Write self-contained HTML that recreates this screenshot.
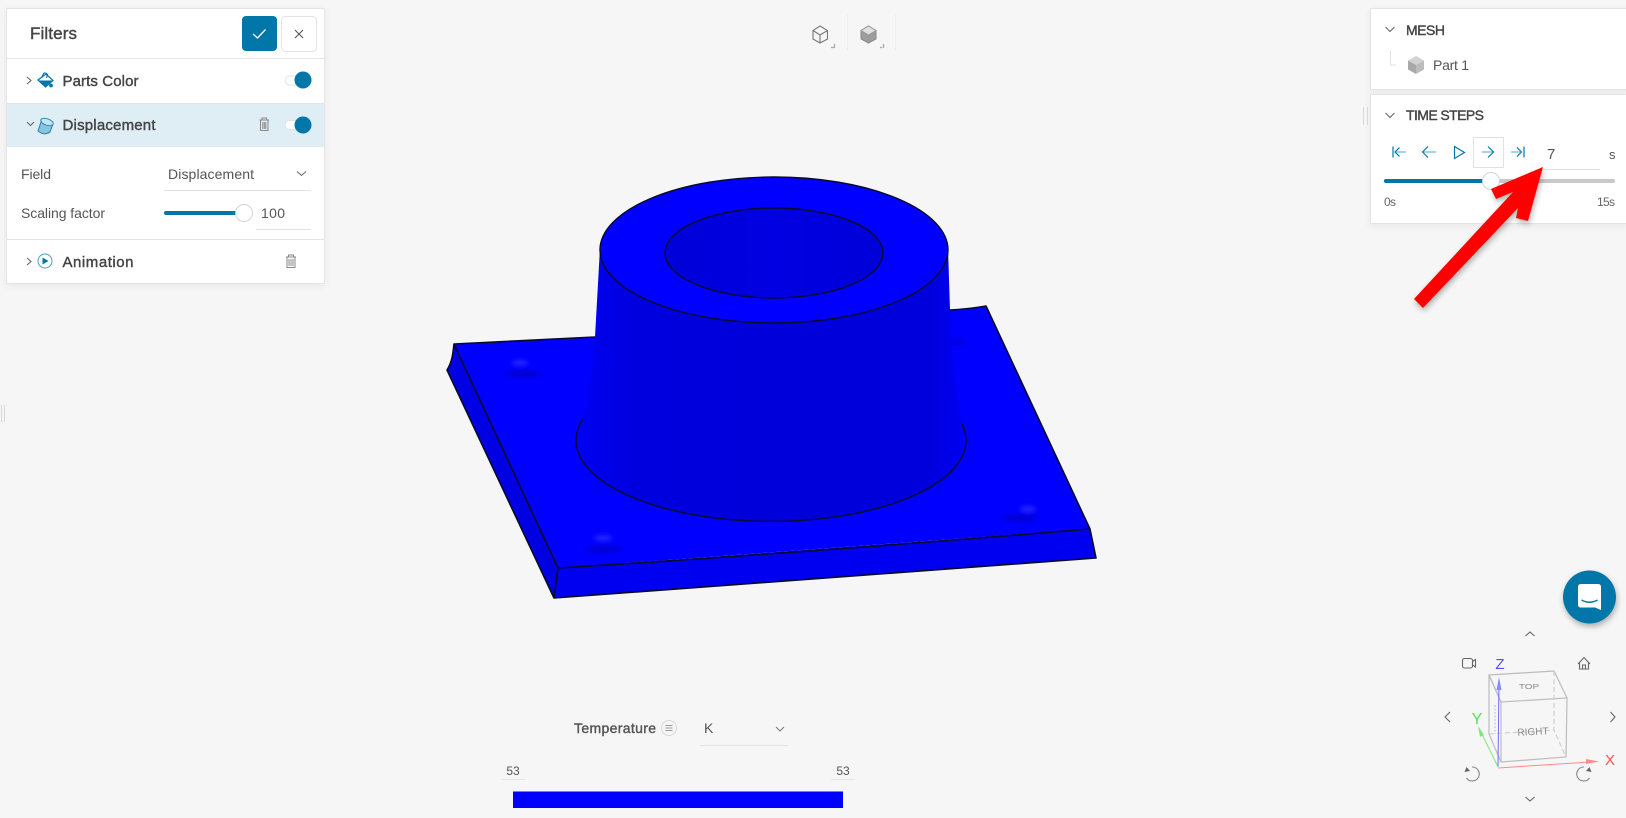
<!DOCTYPE html>
<html>
<head>
<meta charset="utf-8">
<style>
html,body{margin:0;padding:0;width:1626px;height:818px;overflow:hidden;background:#f6f6f6}
.p{position:absolute;background:#fff;border:1px solid #e4e4e4;box-sizing:border-box;box-shadow:0 2px 8px rgba(0,0,0,.06)}
svg{position:absolute;left:0;top:0}
text{font-family:"Liberation Sans",sans-serif}
.m{stroke:#444;stroke-width:.4px}
</style>
</head>
<body>
<div class="p" style="left:6px;top:8px;width:319px;height:276px"></div>
<div class="p" style="left:1370px;top:8px;width:260px;height:82px"></div>
<div class="p" style="left:1370px;top:94px;width:260px;height:130px"></div>
<svg width="1626" height="818" viewBox="0 0 1626 818">
<defs>
<linearGradient id="cyl" x1="0" x2="1" y1="0" y2="0">
<stop offset="0" stop-color="#0000f4"/><stop offset=".06" stop-color="#0000ea"/><stop offset=".15" stop-color="#0000de"/><stop offset=".55" stop-color="#0000da"/><stop offset=".9" stop-color="#0000dc"/><stop offset=".97" stop-color="#0000ec"/><stop offset="1" stop-color="#0000f4"/>
</linearGradient>
<linearGradient id="hole" x1="0" x2="1" y1="0" y2="0">
<stop offset="0" stop-color="#0000d8"/><stop offset=".5" stop-color="#0000e2"/><stop offset="1" stop-color="#0000d8"/>
</linearGradient>
<filter id="b1" x="-50%" y="-100%" width="200%" height="300%"><feGaussianBlur stdDeviation="2.5"/></filter>
<filter id="sh" x="-20%" y="-20%" width="150%" height="150%"><feDropShadow dx="1" dy="3" stdDeviation="3" flood-color="#000" flood-opacity=".3"/></filter>
</defs>

<!-- MODEL -->
<path d="M454,344 C453,354 452,362 447,370 L554,598 L558,568 Z" fill="#0000e2"/>
<path d="M558,568 L1090,529 L1096,558 L554,598 Z" fill="#0000f0"/>
<path d="M454,344 L595,337 L950,310 Q970,309 986,306 L1090,529 L558,568 Z" fill="#0000ff"/>
<g filter="url(#b1)">
<ellipse cx="520" cy="363" rx="8" ry="2.500" fill="#3a3aff" opacity=".8"/><ellipse cx="523" cy="374" rx="18" ry="3.500" fill="#0000d0"/>
<ellipse cx="603" cy="538" rx="9" ry="2.500" fill="#3a3aff" opacity=".8"/><ellipse cx="604" cy="549" rx="18" ry="3.500" fill="#0000d0"/>
<ellipse cx="1028" cy="509" rx="8" ry="2.500" fill="#3a3aff" opacity=".8"/><ellipse cx="1020" cy="518" rx="18" ry="3.500" fill="#0000d0"/>
<ellipse cx="958" cy="342" rx="8" ry="3" fill="#0000dc"/>
</g>
<path d="M454,344 L595,337 M950,310 Q970,309 986,306 L1090,529 L1096,558 L554,598 L447,370 C452,362 453,354 454,344 L558,568 L554,598 M558,568 Q800,553 1090,529" fill="none" stroke="#0a0a2a" stroke-width="1.600" stroke-linejoin="round"/>
<path d="M600,248 L595,337 C592,370 590,395 583,419 A195 81 0 1 0 962,424 C955,390 950,350 950,310 L948,248 Z" fill="url(#cyl)"/>
<path d="M583,419 A195 81 0 1 0 962,424" fill="none" stroke="#0a0a2a" stroke-width="1.400"/>
<ellipse cx="774" cy="250" rx="174" ry="73" fill="#0000ff" stroke="#0a0a2a" stroke-width="1.400"/>
<ellipse cx="774" cy="253" rx="109" ry="45" fill="url(#hole)" stroke="#0a0a2a" stroke-width="1.400"/>

<!-- LEFT PANEL -->
<rect x="7" y="58" width="317" height="1" fill="#e4e4e4"/>
<rect x="7" y="103" width="317" height="1" fill="#e4e4e4"/>
<rect x="7" y="104" width="317" height="43" fill="#dfedf5"/>
<rect x="7" y="239" width="317" height="1" fill="#e4e4e4"/>
<text x="30" y="39" font-size="17" class="m" fill="#444" textLength="47" lengthAdjust="spacing">Filters</text>
<rect x="242" y="16" width="35" height="35" rx="4" fill="#0077a8"/>
<path d="M253,34 L257.500,38 L265.500,29.500" fill="none" stroke="#fff" stroke-width="1.300"/>
<rect x="281.500" y="16.500" width="35" height="35" rx="4" fill="#fff" stroke="#e4e4e4"/>
<path d="M295,30 L303,38 M303,30 L295,38" stroke="#555" stroke-width="1.100"/>

<path d="M27,77 L31,80.500 L27,84" fill="none" stroke="#666" stroke-width="1.100"/>
<g>
<path d="M38,80 L46,74 L53,80.500 L45.500,87 Z" fill="#fff" stroke="#0077a8" stroke-width="1.200"/>
<path d="M38.500,80.500 L52.500,80.500 L45.500,87 Z" fill="#0077a8"/>
<path d="M42,77 L43.500,73.500 Q45.500,72 47.500,74.500 L46.500,78" fill="none" stroke="#0077a8" stroke-width="1.100"/>
<circle cx="51" cy="85.500" r="1.900" fill="#0077a8"/>
</g>
<text x="62.500" y="86" font-size="15" class="m" fill="#444" textLength="76" lengthAdjust="spacing">Parts Color</text>
<rect x="285" y="76" width="20" height="9" rx="4.500" fill="#fff" stroke="#e2e2e2"/>
<circle cx="303" cy="80" r="8.500" fill="#0077a8"/>

<path d="M27,122 L30.500,125.500 L34,122" fill="none" stroke="#666" stroke-width="1.100"/>
<path d="M41.500,120.500 L38,131 Q44,136 50,132 L53,124 Z" fill="#8cc3dc" stroke="#2d8ab3" stroke-width="1.100"/>
<ellipse cx="47" cy="122" rx="6.500" ry="3.200" transform="rotate(18 47 122)" fill="#c7e1ee" stroke="#2d8ab3" stroke-width="1"/>
<text x="62.500" y="130" font-size="15" class="m" fill="#444" textLength="93" lengthAdjust="spacing">Displacement</text>
<g fill="none" stroke="#888" stroke-width="1">
<path d="M259.500,120 H269 M262,120 V118 H266.500 V120 M260.500,120 V130.500 H268 V120 M262.800,122 V129 M264.300,122 V129 M265.800,122 V129"/>
</g>
<rect x="285" y="120.500" width="20" height="9" rx="4.500" fill="#fff" stroke="#e2e2e2"/>
<circle cx="303" cy="125" r="8.500" fill="#0077a8"/>

<text x="21" y="179" font-size="14" fill="#555" textLength="30" lengthAdjust="spacing">Field</text>
<text x="168" y="179" font-size="14" fill="#555" textLength="86" lengthAdjust="spacing">Displacement</text>
<path d="M297,171.500 L301.500,175.500 L306,171.500" fill="none" stroke="#666" stroke-width="1"/>
<rect x="164" y="190" width="147" height="1" fill="#e2e2e2"/>
<text x="21" y="218" font-size="14" fill="#555" textLength="84" lengthAdjust="spacing">Scaling factor</text>
<rect x="164" y="211" width="75" height="4" rx="2" fill="#0077a8"/>
<circle cx="244" cy="213" r="8.500" fill="#fff" stroke="#d4d4d4"/>
<text x="261" y="218" font-size="14" fill="#555" textLength="24" lengthAdjust="spacing">100</text>
<rect x="256" y="229" width="55" height="1" fill="#e2e2e2"/>

<path d="M27,258 L31,261.500 L27,265" fill="none" stroke="#666" stroke-width="1.100"/>
<circle cx="45" cy="261" r="7" fill="#fff" stroke="#4a9cc2" stroke-width="1"/>
<path d="M42.500,257.500 L48.500,261 L42.500,264.500 Z" fill="#0077a8"/>
<text x="62.500" y="267" font-size="15" class="m" fill="#444" textLength="71" lengthAdjust="spacing">Animation</text>
<g fill="none" stroke="#888" stroke-width="1">
<path d="M286,257 H296 M288.500,257 V255 H293.500 V257 M287,257 V267.500 H295 V257 M289,259 V266 M291,259 V266 M293,259 V266"/>
</g>

<!-- handles -->
<path d="M1363.500,107 V125 M1367.500,107 V125 M1.500,405 V422 M4.500,405 V422" stroke="#d8d8d8" stroke-width="1"/>

<!-- RIGHT PANELS -->
<path d="M1385.500,27 L1390,31.500 L1394.500,27" fill="none" stroke="#666" stroke-width="1.100"/>
<text x="1406" y="35" font-size="14" class="m" fill="#444" textLength="39" lengthAdjust="spacing">MESH</text>
<path d="M1390.500,50 V65 H1396" fill="none" stroke="#e2e2e2"/>
<path d="M1416,56 L1424,60.500 L1416,65 L1408,60.500 Z" fill="#d2d2d2"/>
<path d="M1408,60.500 L1416,65 V74 L1408,69.500 Z" fill="#a8a8a8"/>
<path d="M1424,60.500 L1416,65 V74 L1424,69.500 Z" fill="#bdbdbd"/>
<text x="1433" y="70" font-size="14" fill="#555" textLength="36" lengthAdjust="spacing">Part 1</text>

<path d="M1385.500,113 L1390,117.500 L1394.500,113" fill="none" stroke="#666" stroke-width="1.100"/>
<text x="1406" y="120" font-size="14" class="m" fill="#444" textLength="78" lengthAdjust="spacing">TIME STEPS</text>

<rect x="1473.500" y="137.500" width="30" height="30" fill="none" stroke="#e2e2e2"/>
<g fill="none" stroke-width="1.200">
<path d="M1393,146.500 V157.500" stroke="#0077a8"/><path d="M1399.500,147.500 L1395,152 L1399.500,156.500" stroke="#0077a8"/><path d="M1396,152 H1406" stroke="#6fb3d0"/>
<path d="M1428,146.500 L1422.500,152 L1428,157.500" stroke="#0077a8"/><path d="M1423.500,152 H1436" stroke="#6fb3d0"/>
<path d="M1454.500,146.500 L1464.500,152.500 L1454.500,158.500 Z" stroke="#0077a8"/>
<path d="M1488,146.500 L1493.500,152 L1488,157.500" stroke="#0077a8"/><path d="M1482,152 H1492.500" stroke="#6fb3d0"/>
<path d="M1524,146.500 V157.500" stroke="#0077a8"/><path d="M1517,147.500 L1521.500,152 L1517,156.500" stroke="#0077a8"/><path d="M1511,152 H1521" stroke="#6fb3d0"/>
</g>
<text x="1547" y="159" font-size="15" fill="#555">7</text>
<text x="1609" y="159" font-size="13" fill="#555">s</text>
<rect x="1543" y="169" width="57" height="1" fill="#e2e2e2"/>
<rect x="1384" y="179" width="231" height="4" rx="2" fill="#c9c9c9"/>
<rect x="1384" y="179" width="106" height="4" rx="2" fill="#0077a8"/>
<circle cx="1491" cy="181" r="8.500" fill="#fff" stroke="#d4d4d4"/>
<text x="1384" y="206" font-size="12" fill="#666" textLength="12" lengthAdjust="spacing">0s</text>
<text x="1597" y="206" font-size="12" fill="#666" textLength="18" lengthAdjust="spacing">15s</text>

<!-- ARROW -->
<path d="M1543,167 L1491,189 L1496,199 L1513,192 L1414,299 L1423,308 L1518,208 L1516,218 L1528,221 Z" fill="#ff0000" filter="url(#sh)"/>

<!-- TOOLBAR -->
<rect x="847" y="15" width="1" height="35" fill="#ececec"/>
<rect x="895" y="15" width="1" height="35" fill="#ececec"/>
<g fill="none" stroke="#777" stroke-width="1.100">
<path d="M820,26 L827.500,30.500 V39 L820,43 L813,39 V30.500 Z M813,30.500 L820,35 L827.500,30.500 M820,35 V43"/>
</g>
<path d="M868.500,26 L876,30.500 V39 L868.500,43 L861,39 V30.500 Z" fill="#9d9d9d" stroke="#8a8a8a"/>
<path d="M868.500,26 L876,30.500 L868.500,35 L861,30.500 Z" fill="#e0e0e0" stroke="#999"/>
<path d="M834,47.500 H831 M834.500,44 V48 M882,47.500 H880 M883.500,44 V48" stroke="#aaa" stroke-width="1.300"/>

<!-- LEGEND -->
<text x="574" y="733" font-size="14" class="m" style="stroke:#555" fill="#555" textLength="82" lengthAdjust="spacing">Temperature</text>
<circle cx="669" cy="728" r="7.500" fill="#f6f6f6" stroke="#d8d8d8"/>
<path d="M665.500,725.500 H672.500 M665.500,728 H672.500 M665.500,730.500 H672.500" stroke="#999" stroke-width="1.100"/>
<text x="704" y="733" font-size="14" fill="#555">K</text>
<path d="M776,727 L780,731 L784,727" fill="none" stroke="#777" stroke-width="1"/>
<rect x="700" y="745" width="88" height="1" fill="#e2e2e2"/>
<text x="513" y="775" font-size="12" fill="#555" text-anchor="middle">53</text>
<rect x="501" y="779" width="24" height="1" fill="#e6e6e6"/>
<text x="843" y="775" font-size="12" fill="#555" text-anchor="middle">53</text>
<rect x="831" y="779" width="24" height="1" fill="#e6e6e6"/>
<rect x="513" y="791" width="330" height="17" fill="#0000ff"/>
<rect x="513" y="791" width="330" height="1" fill="#7a7ae8"/>

<!-- CHAT -->
<circle cx="1589.500" cy="597" r="26.500" fill="#0077a8" filter="url(#sh)"/>
<path d="M1581,584 H1598 Q1601,584 1601,587 V610 L1595,607.500 H1581 Q1578,607.500 1578,604.500 V587 Q1578,584 1581,584 Z" fill="#fff"/>
<path d="M1581.500,600 Q1589.500,604.500 1597.500,600" fill="none" stroke="#0077a8" stroke-width="1.500"/>

<!-- NAV CUBE -->
<g fill="none" stroke="#666" stroke-width="1.100">
<path d="M1525.500,636 L1530,632 L1534.500,636"/>
<path d="M1525.500,797 L1530,801 L1534.500,797"/>
<path d="M1450,712 L1445,717 L1450,722"/>
<path d="M1610.500,712 L1615,717 L1610.500,722"/>
<rect x="1462.500" y="658.500" width="10" height="9.500" rx="2"/>
<path d="M1472.500,661.500 L1475.500,659.500 V667 L1472.500,665"/>
<path d="M1578,664 L1584,657.500 L1590,664 M1579.500,662.500 V669 H1588.500 V662.500 M1582.500,669 V665 H1585.500 V669"/>
<path d="M1472,767 A7 7 0 1 1 1466.500,778" stroke="#888"/>
<path d="M1584,767 A7 7 0 1 0 1589.500,778" stroke="#888"/>
</g>
<path d="M1464.500,772 L1470,771 L1466.500,767 Z M1591.500,772 L1586,771 L1589.500,767 Z" fill="#666"/>
<g fill="none" stroke="#bcbcbc" stroke-width="1.200">
<path d="M1489,675 L1554,671 L1567,698 L1501,702 Z"/>
<path d="M1501,702 V762 L1566,757 L1567,698"/>
<path d="M1489,675 L1489,734 L1501,762"/>
<path d="M1489,675 L1501,702"/>
<path d="M1554,671 V730 L1566,757 M1489,734 L1554,730" stroke-dasharray="5 3" stroke="#d0d0d0"/>
<path d="M1495,705 V734" stroke-dasharray="2 1.500" stroke="#c8c8c8"/>
</g>
<text transform="translate(1529,689) scale(1,.7)" x="0" y="0" font-size="10" fill="#888" text-anchor="middle">TOP</text>
<text transform="rotate(-3 1533 731)" x="1533" y="735" font-size="10" fill="#888" text-anchor="middle">RIGHT</text>
<path d="M1498,767 L1499,680" stroke="#6a6aff" stroke-width="1"/>
<path d="M1496.500,690 L1499,677 L1501.500,690 Z" fill="#8a8aff"/>
<path d="M1498,767 L1479,728" stroke="#7bea7b" stroke-width="1"/>
<path d="M1478,726 L1484,735 L1480,737 Z" fill="#7bea7b"/>
<path d="M1498,768 L1590,762" stroke="#ff8a8a" stroke-width="1"/>
<path d="M1586,759 L1599,761.500 L1586,764 Z" fill="#ff8a8a"/>
<text x="1500" y="669" font-size="15" fill="#5050ff" text-anchor="middle">Z</text>
<text x="1477" y="724" font-size="16" fill="#55e055" text-anchor="middle">Y</text>
<text x="1610" y="765" font-size="15" fill="#ff5050" text-anchor="middle">X</text>
</svg>
</body>
</html>
